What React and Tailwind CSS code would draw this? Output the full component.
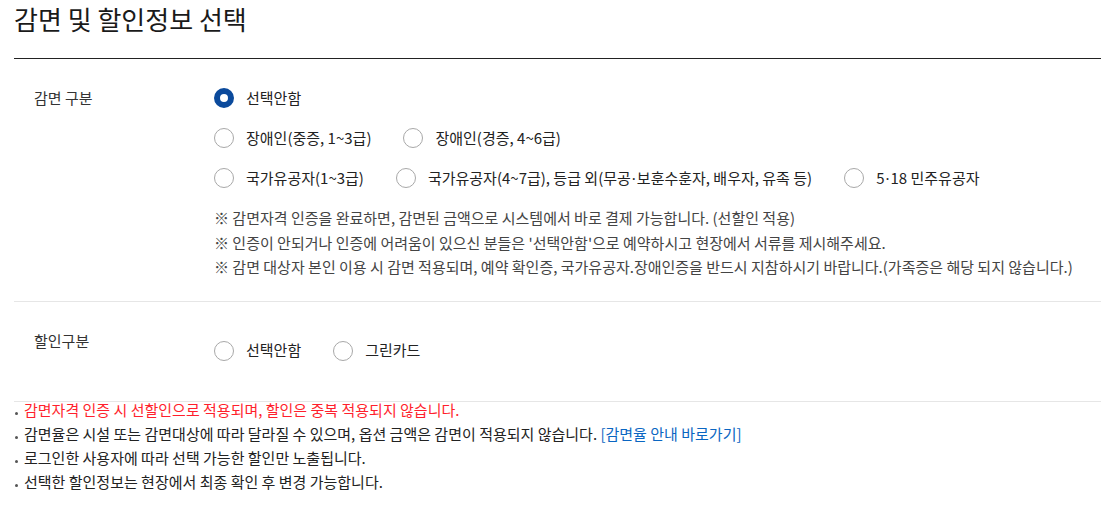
import React from 'react';

const Dot = () => <span className="font-['Noto_Sans',sans-serif] px-[1px]">·</span>;

const Radio = ({ label, checked }) => (
  <label className="flex items-center gap-3 cursor-pointer">
    {checked ? (
      <span className="w-5 h-5 rounded-full border-[6px] border-[#0b4a9c] bg-white box-border" />
    ) : (
      <span className="w-5 h-5 rounded-full border border-[#a8a8a8] bg-white box-border" />
    )}
    <span className="text-[15px] text-[#222]">{label}</span>
  </label>
);

const Bullet = () => (
  <span className="w-[10px] shrink-0 flex items-end pb-[7px]">
    <span className="w-[3px] h-[3px] ml-[1px] rounded-full bg-[#555]" />
  </span>
);

const App = () => {
  return (
    <div className="w-[1101px] min-h-[526px] bg-white pl-[14px] font-['Noto_Sans_CJK_KR','Noto_Sans',sans-serif] text-[#222]">
      {/* Title */}
      <div className="border-b border-[#222] pt-[1px] pb-[21px]">
        <h1 className="text-[26px] leading-[36px] font-normal text-[#1a1a1a]">감면 및 할인정보 선택</h1>
      </div>

      {/* 감면 구분 */}
      <div className="flex border-b border-[#e6e6e6] pt-[19px] pb-[21px]">
        <div className="w-[200px] pl-[20px] leading-[40px] text-[15px] text-[#333]">감면 구분</div>
        <div className="flex flex-col">
          <div className="h-10 flex items-center gap-8">
            <Radio label="선택안함" checked />
          </div>
          <div className="h-10 flex items-center gap-8">
            <Radio label="장애인(중증, 1~3급)" />
            <Radio label="장애인(경증, 4~6급)" />
          </div>
          <div className="h-10 flex items-center gap-8">
            <Radio label="국가유공자(1~3급)" />
            <Radio label={<>국가유공자(4~7급), 등급 외(무공<Dot />보훈수훈자, 배우자, 유족 등)</>} />
            <Radio label={<>5<Dot />18 민주유공자</>} />
          </div>
          <div className="mt-2 text-[15px] leading-[24.5px] text-[#444]">
            <p>※ 감면자격 인증을 완료하면, 감면된 금액으로 시스템에서 바로 결제 가능합니다. (선할인 적용)</p>
            <p>※ 인증이 안되거나 인증에 어려움이 있으신 분들은 '선택안함'으로 예약하시고 현장에서 서류를 제시해주세요.</p>
            <p>※ 감면 대상자 본인 이용 시 감면 적용되며, 예약 확인증, 국가유공자.장애인증을 반드시 지참하시기 바랍니다.(가족증은 해당 되지 않습니다.)</p>
          </div>
        </div>
      </div>

      {/* 할인구분 */}
      <div className="flex border-b border-[#e6e6e6] h-[100px]">
        <div className="w-[200px] pl-[20px] pt-[28px] leading-[22px] text-[15px] text-[#333]">할인구분</div>
        <div className="pt-[29px]">
          <div className="h-10 flex items-center gap-8">
            <Radio label="선택안함" />
            <Radio label="그린카드" />
          </div>
        </div>
      </div>

      {/* 안내 */}
      <ul className="text-[15px] leading-[24px] -mt-[4px]">
        <li className="flex text-[#ff1f2d]">
          <Bullet />
          감면자격 인증 시 선할인으로 적용되며, 할인은 중복 적용되지 않습니다.
        </li>
        <li className="flex">
          <Bullet />
          <span>감면율은 시설 또는 감면대상에 따라 달라질 수 있으며, 옵션 금액은 감면이 적용되지 않습니다. <a href="#" className="text-[#0a66c2]">[감면율 안내 바로가기]</a></span>
        </li>
        <li className="flex">
          <Bullet />
          로그인한 사용자에 따라 선택 가능한 할인만 노출됩니다.
        </li>
        <li className="flex">
          <Bullet />
          선택한 할인정보는 현장에서 최종 확인 후 변경 가능합니다.
        </li>
      </ul>
    </div>
  );
};

export default App;
